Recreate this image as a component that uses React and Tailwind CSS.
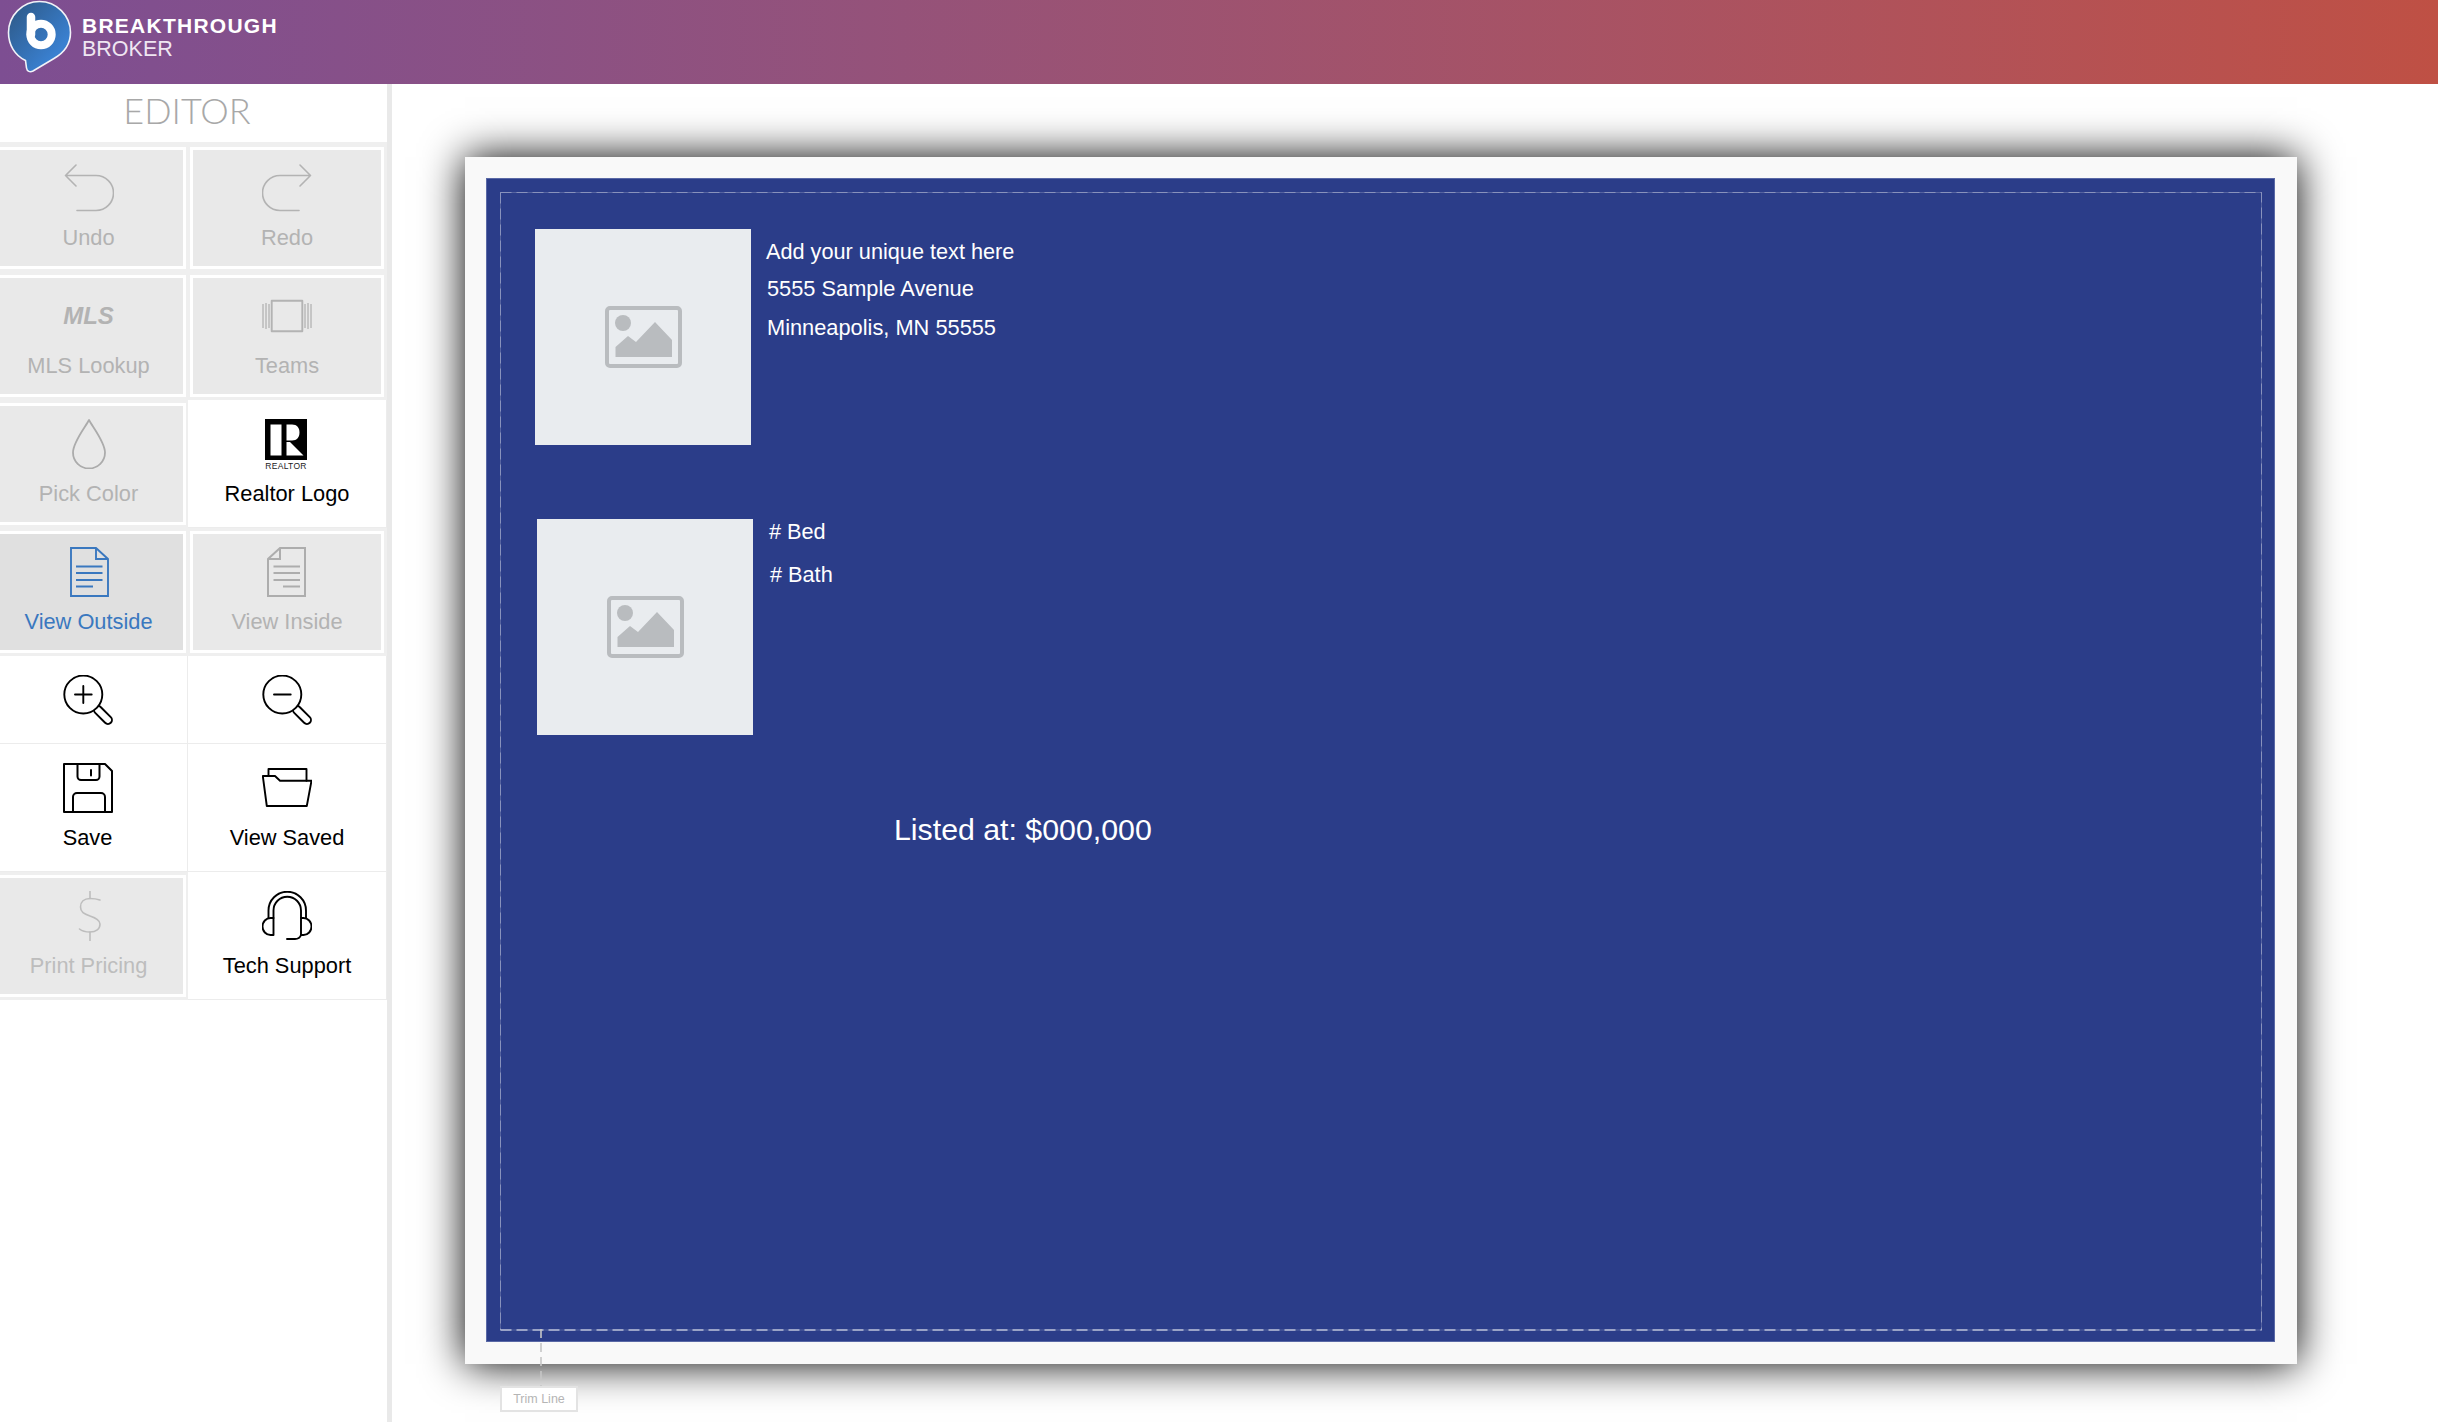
const GRAY = '#b3b3b3'
const BLUE = '#3a78bf'

function Svg({ color = '#000', width = 2, children }) {
  return (
    <svg width="50" height="50" viewBox="0 0 50 50" fill="none" stroke={color} strokeWidth={width} strokeLinejoin="round" strokeLinecap="round">
      {children}
    </svg>
  )
}

const UndoPath = () => <path d="M12 2 L1.5 12.5 L12 23 M1.5 12.5 H32 A17.5 17.5 0 0 1 32 47.5 H13" />

const icons = {
  undo: <Svg color={GRAY} width={1.6}><UndoPath /></Svg>,
  redo: <Svg color={GRAY} width={1.6}><g transform="translate(50 0) scale(-1 1)"><UndoPath /></g></Svg>,
  mls: <div className="flex h-[50px] items-center text-[24px] font-bold italic leading-none text-[#b3b3b3]">MLS</div>,
  teams: (
    <Svg color={GRAY} width={1.3}>
      <rect x="9.7" y="9.7" width="30.6" height="30.6" strokeWidth="1.9" />
      <path d="M1 13 V37 M4 12 V38 M7 13 V37 M43 13 V37 M46 12 V38 M49 13 V37" strokeLinecap="butt" />
    </Svg>
  ),
  drop: <Svg color="#ababab" width={1.8}><path d="M25 1 C22 7 9 23 9 33.5 A16 16 0 0 0 41 33.5 C41 23 28 7 25 1 Z" /></Svg>,
  realtor: (
    <svg width="50" height="51" viewBox="0 0 50 51">
      <rect x="3" y="0" width="42" height="41" fill="#000" />
      <rect x="8.5" y="5.5" width="11" height="31" fill="#fff" />
      <path d="M24.5 5.5 H30 C35 5.5 37.5 9 37.5 13.5 C37.5 18 35 21.5 30 21.5 H24.5 Z" fill="#fff" />
      <path d="M24.5 23 H28 L41.5 36.5 H24.5 Z" fill="#fff" />
      <text x="24" y="49.5" textAnchor="middle" fontSize="8.5" letterSpacing="0.3" fill="#222" fontFamily="Liberation Sans, sans-serif">REALTOR</text>
    </svg>
  ),
  outside: (
    <Svg color={BLUE} width={1.9}>
      <path d="M7 1 H32 L44 12 V49 H7 Z M32 1 V12 H44" strokeLinejoin="miter" />
      <path d="M12 19.5 H38.5 M12 26 H38.5 M12 33 H38.5 M12 39.5 H29" strokeLinecap="butt" />
    </Svg>
  ),
  inside: (
    <Svg color="#adadad" width={2}>
      <g transform="translate(50 0) scale(-1 1)">
        <path d="M7 1 H32 L44 12 V49 H7 Z M32 1 V12 H44" strokeLinejoin="miter" />
        <path d="M12 19.5 H38.5 M12 26 H38.5 M12 33 H38.5 M12 39.5 H29" strokeLinecap="butt" />
      </g>
    </Svg>
  ),
  zoomIn: (
    <Svg width={1.9}>
      <rect x="29" y="36" width="22" height="8" rx="4" transform="rotate(45 40 40)" />
      <circle cx="20.3" cy="19.5" r="19" fill="#fff" />
      <path d="M12 19.5 H28.7 M20.3 11 V28" />
    </Svg>
  ),
  zoomOut: (
    <Svg width={1.9}>
      <rect x="29" y="36" width="22" height="8" rx="4" transform="rotate(45 40 40)" />
      <circle cx="20.3" cy="19.5" r="19" fill="#fff" />
      <path d="M12 19.5 H28.7" />
    </Svg>
  ),
  save: (
    <Svg width={2}>
      <path d="M1 1 H42 L49 8 V49 H1 Z" />
      <path d="M14.5 1 V13.5 A3.5 3.5 0 0 0 18 17 H33 A3.5 3.5 0 0 0 36.5 13.5 V1" />
      <path d="M28 7 V12.5" />
      <path d="M10 49 V34 A4 4 0 0 1 14 30 H38 A4 4 0 0 1 42 34 V49" />
    </Svg>
  ),
  folder: (
    <Svg width={1.9}>
      <path d="M6.5 13 V6 H44.5 V17.7" />
      <path d="M0.8 13 H13 L18 17.7 H49.5 L44.8 43 H4.8 Z" />
    </Svg>
  ),
  dollar: (
    <Svg color="#bdbdbd" width={1.6}>
      <path d="M26 0.5 V7.5 M26 41 V49.5" />
      <path d="M36 9 C33 8 30 7.5 26 7.5 C20 7.5 16.5 11 16.5 16 C16.5 21 20 23 26 25 C32 27 36 29 36 33 C36 38 32 41 26 41 C22 41 18 40 15.5 38" />
    </Svg>
  ),
  headset: (
    <Svg width={1.9}>
      <path d="M6.5 27 V19.5 A18.7 18.7 0 0 1 44 19.5 V27" />
      <path d="M11.5 27 V19.5 A13.7 13.7 0 0 1 39 19.5 V27" />
      <path d="M11.5 27 H8.5 A8 8.5 0 0 0 8.5 44 H11.5 Z" />
      <path d="M39 27 H41.5 A8 8.5 0 0 1 41.5 44 H39 Z" />
      <path d="M39 44 C38 47 36 48 33 48 H25" />
    </Svg>
  ),
}

const tools = [
  { icon: 'undo', label: 'Undo', off: true },
  { icon: 'redo', label: 'Redo', off: true },
  { icon: 'mls', label: 'MLS Lookup', off: true },
  { icon: 'teams', label: 'Teams', off: true },
  { icon: 'drop', label: 'Pick Color', off: true },
  { icon: 'realtor', label: 'Realtor Logo' },
  { icon: 'outside', label: 'View Outside', off: true, active: true },
  { icon: 'inside', label: 'View Inside', off: true },
  { icon: 'zoomIn', short: true },
  { icon: 'zoomOut', short: true },
  { icon: 'save', label: 'Save' },
  { icon: 'folder', label: 'View Saved' },
  { icon: 'dollar', label: 'Print Pricing', off: true },
  { icon: 'headset', label: 'Tech Support' },
]

function Tool({ tool, left }) {
  const label = tool.label && (
    <div className="mt-[12px] text-[21.8px] leading-[26px]">{tool.label}</div>
  )

  if (tool.off) {
    const colors = tool.active
      ? 'bg-[#e0e0e0] text-[#3a78bf]'
      : tool.icon === 'dollar'
        ? 'bg-[#e9e9e9] text-[#bdbdbd]'
        : 'bg-[#e9e9e9] text-[#b3b3b3]'
    return (
      <div className={`h-[128px] bg-[#efefef] p-[3px] ${left ? 'pr-[2px]' : 'pl-[2px]'}`}>
        <div className={`flex h-full flex-col items-center border-[3px] border-white pt-[13px] ${colors}`}>
          {icons[tool.icon]}
          {label}
        </div>
      </div>
    )
  }

  return (
    <div className={`flex flex-col items-center border-r border-b border-[#ececec] bg-white pt-[19px] text-black ${tool.short ? 'h-[88px]' : 'h-[128px]'}`}>
      <div className="h-[50px]">{icons[tool.icon]}</div>
      {label}
    </div>
  )
}

function Logo() {
  return (
    <svg width="74" height="76" viewBox="0 0 74 76" className="shrink-0">
      <defs>
        <linearGradient id="bubble" x1="0" y1="0" x2="1" y2="1">
          <stop offset="0" stopColor="#2c5682" />
          <stop offset="0.75" stopColor="#3a80d0" />
        </linearGradient>
      </defs>
      <path
        d="M39.5 1.5 C56.5 1.5 70.5 15.5 70.5 32.5 C70.5 44 63.5 53 54 58.5 L33 71 C30 72.5 27 71.5 26.5 68 L25.5 60.5 C15 55.5 8.5 45 8.5 32.5 C8.5 15.5 22.5 1.5 39.5 1.5 Z"
        fill="url(#bubble)"
        stroke="#f2f2f8"
        strokeWidth="1.6"
      />
      <circle cx="41" cy="34.5" r="10.7" fill="none" stroke="#fff" strokeWidth="8" />
      <path d="M31 17 V34.5" stroke="#fff" strokeWidth="8.5" strokeLinecap="round" />
    </svg>
  )
}

function Placeholder({ className }) {
  return (
    <div className={`absolute flex h-[216px] w-[216px] items-center justify-center bg-[#e9ecef] ${className}`}>
      <svg width="77" height="62" viewBox="0 0 77 62">
        <rect x="2" y="2" width="73" height="58" rx="3" fill="none" stroke="#b9bcbf" strokeWidth="4" />
        <circle cx="18" cy="17" r="8" fill="#b9bcbf" />
        <path d="M10.5 51 V41 L23 30 L31 36 L50 16 L67 34 V51 Z" fill="#b9bcbf" />
      </svg>
    </div>
  )
}

// the dashed bleed guide inside the artboard, bottom edge reads brighter
function TrimGuide() {
  return (
    <svg className="absolute top-[14px] left-[14px]" width="1762" height="1139" fill="none">
      <rect x="0.5" y="0.5" width="1761" height="1137.5" stroke="#fff" strokeOpacity="0.2" />
      <path d="M0.5 0.5 H1761.5 V1138 M0.5 0.5 V1138" stroke="#fff" strokeOpacity="0.3" strokeDasharray="11 5" />
      <path d="M0.5 1138 H1761.5" stroke="#fff" strokeOpacity="0.95" strokeDasharray="11 5" />
    </svg>
  )
}

export default function App() {
  return (
    <div className="flex h-screen flex-col overflow-hidden bg-white font-['Liberation_Sans',Arial,sans-serif]">
      <header className="flex h-[84px] shrink-0 items-start bg-gradient-to-r from-[#7d4e92] to-[#bf5044]">
        <Logo />
        <div className="ml-[8px] pt-[13px] text-white">
          <div className="text-[21px] leading-[25px] font-bold tracking-[1.25px]">BREAKTHROUGH</div>
          <div className="text-[21.5px] leading-[22px] text-[#efe6f2]">BROKER</div>
        </div>
      </header>

      <div className="flex min-h-0 flex-1">
        <aside className="w-[392px] shrink-0 overflow-hidden border-r-[5px] border-[#e9e9e9] bg-white">
          <div className="flex h-[58px] items-center justify-center pr-[13px] pb-[6px] font-['Lato',sans-serif] text-[36px] font-light text-[#a8a8a8]">EDITOR</div>
          <div className="h-[2px] bg-[#efefef]" />
          <div className="ml-[-12px] grid w-[399px] grid-cols-[200px_199px]">
            {tools.map((tool, i) => (
              <Tool key={tool.icon} tool={tool} left={i % 2 === 0} />
            ))}
          </div>
        </aside>

        <main className="flex-1 pt-[73px] pl-[73px]">
          <div className="relative h-[1207px] w-[1832px] bg-[#f9f9f9] pt-[21px] pr-[22px] pb-[22px] pl-[21px] shadow-[0_0_40px_#000]">
            <div className="relative h-full w-full bg-[#2b3d89] text-white shadow-[inset_0_0_0_1px_#5a69a6]">
              <TrimGuide />
              <Placeholder className="top-[51px] left-[49px]" />
              <div className="absolute top-[61px] left-[280px] text-[21.7px] leading-[26px]">Add your unique text here</div>
              <div className="absolute top-[98px] left-[281px] text-[21.8px] leading-[26px]">5555 Sample Avenue</div>
              <div className="absolute top-[137px] left-[281px] text-[21.8px] leading-[26px]">Minneapolis, MN 55555</div>
              <Placeholder className="top-[341px] left-[51px]" />
              <div className="absolute top-[341px] left-[283px] text-[21.7px] leading-[26px]">{'# Bed'}</div>
              <div className="absolute top-[384px] left-[284px] text-[21.7px] leading-[26px]">{'# Bath'}</div>
              <div className="absolute top-[634px] left-[408px] text-[30.3px] leading-[36px]">Listed at: $000,000</div>
            </div>
            <svg className="absolute top-[1172px] left-[75px]" width="2" height="57" fill="none">
              <path d="M1 0 V57" stroke="#c6c6c6" strokeWidth="1.6" strokeDasharray="9 5" />
            </svg>
            <div className="absolute top-[1229px] left-[35px] flex h-[26px] w-[78px] items-center justify-center border-2 border-[#e3e3e3] bg-white text-[12.5px] text-[#b5b5b5]">
              Trim Line
            </div>
          </div>
        </main>
      </div>
    </div>
  )
}
